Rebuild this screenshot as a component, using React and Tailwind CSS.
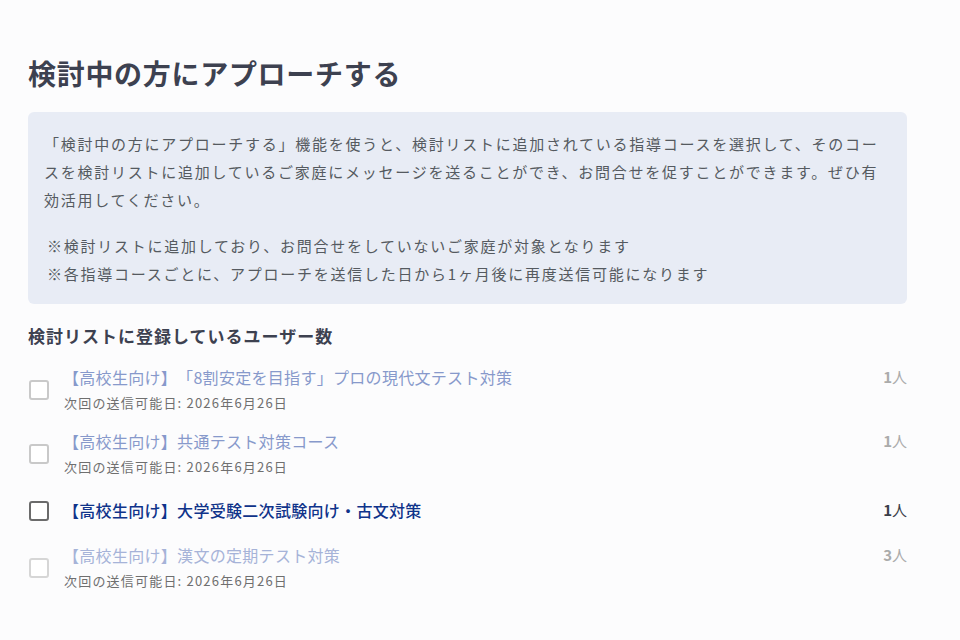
import React from "react";

const rows = [
  { title: "【高校生向け】「8割安定を目指す」プロの現代文テスト対策", sub: true, count: 1, state: "disabled", h: "h-[64px]" },
  { title: "【高校生向け】共通テスト対策コース", sub: true, count: 1, state: "disabled", h: "h-[64px]" },
  { title: "【高校生向け】大学受験二次試験向け・古文対策", sub: false, count: 1, state: "active", h: "h-[50px]" },
  { title: "【高校生向け】漢文の定期テスト対策", sub: true, count: 3, state: "faded", h: "h-[64px]" },
];

function Row({ r }) {
  const titleColor =
    r.state === "active" ? "text-[#0f338a] font-medium" : r.state === "faded" ? "text-[#a6b3d8]" : "text-[#8799cb]";
  const boxBorder =
    r.state === "active" ? "border-[#6b6b6b]" : r.state === "faded" ? "border-[#d6d6d6]" : "border-[#c9c9c9]";
  const countColor = r.state === "active" ? "text-[#3b3f4a]" : "text-[#ababab]";
  return (
    <div className={`flex items-center ${r.h}`}>
      <div className={`w-[20px] h-[20px] ml-[1px] mt-[2px] rounded-[3px] border-2 bg-white ${boxBorder}`} />
      <div className="flex-1 ml-[14px] flex flex-col">
        <div className="flex items-center justify-between h-[24px]">
          <span className={`text-[16px] tracking-[0.3px] [text-spacing-trim:space-all] ${titleColor}`}>{r.title}</span>
          <span className={`text-[15px] ${countColor}`}>
            <span className="font-bold">{r.count}</span>人
          </span>
        </div>
        {r.sub && (
          <div className="mt-[4px] h-[20px] flex items-center text-[13px] tracking-[1.2px] text-[#6f6f6f] pl-[1px]">
            次回の送信可能日: 2026年6月26日
          </div>
        )}
      </div>
    </div>
  );
}

export default function App() {
  return (
    <div
      className="min-h-[640px] w-[960px] bg-[#fcfcfd]"
      style={{ fontFamily: '"Noto Sans CJK JP", "Noto Sans", sans-serif' }}
    >
      <div className="ml-[28px] w-[879px] pt-[53px]">
        <h1 className="text-[28px] leading-[40px] font-bold text-[#3d4150] tracking-[0.7px]">
          検討中の方にアプローチする
        </h1>
        <div className="mt-[19px] bg-[#e8ecf5] rounded-[6px] pl-[20px] pr-[19px] pt-[18px] pb-[16px] text-[15px] leading-[28px] tracking-[1.75px] text-[#555a60]">
          <p className="-ml-[4px]">
            「検討中の方にアプローチする」機能を使うと、検討リストに追加されている指導コースを選択して、そのコースを検討リストに追加しているご家庭にメッセージを送ることができ、お問合せを促すことができます。ぜひ有効活用してください。
          </p>
          <p className="mt-[18px] -ml-[1px]">
            ※検討リストに追加しており、お問合せをしていないご家庭が対象となります
            <br />
            ※各指導コースごとに、アプローチを送信した日から1ヶ月後に再度送信可能になります
          </p>
        </div>
        <h2 className="mt-[20px] text-[17px] leading-[24px] font-bold text-[#3d4150] tracking-[1px]">
          検討リストに登録しているユーザー数
        </h2>
        <div className="mt-[9px] flex flex-col">
          {rows.map((r, i) => (
            <Row key={i} r={r} />
          ))}
        </div>
      </div>
    </div>
  );
}
